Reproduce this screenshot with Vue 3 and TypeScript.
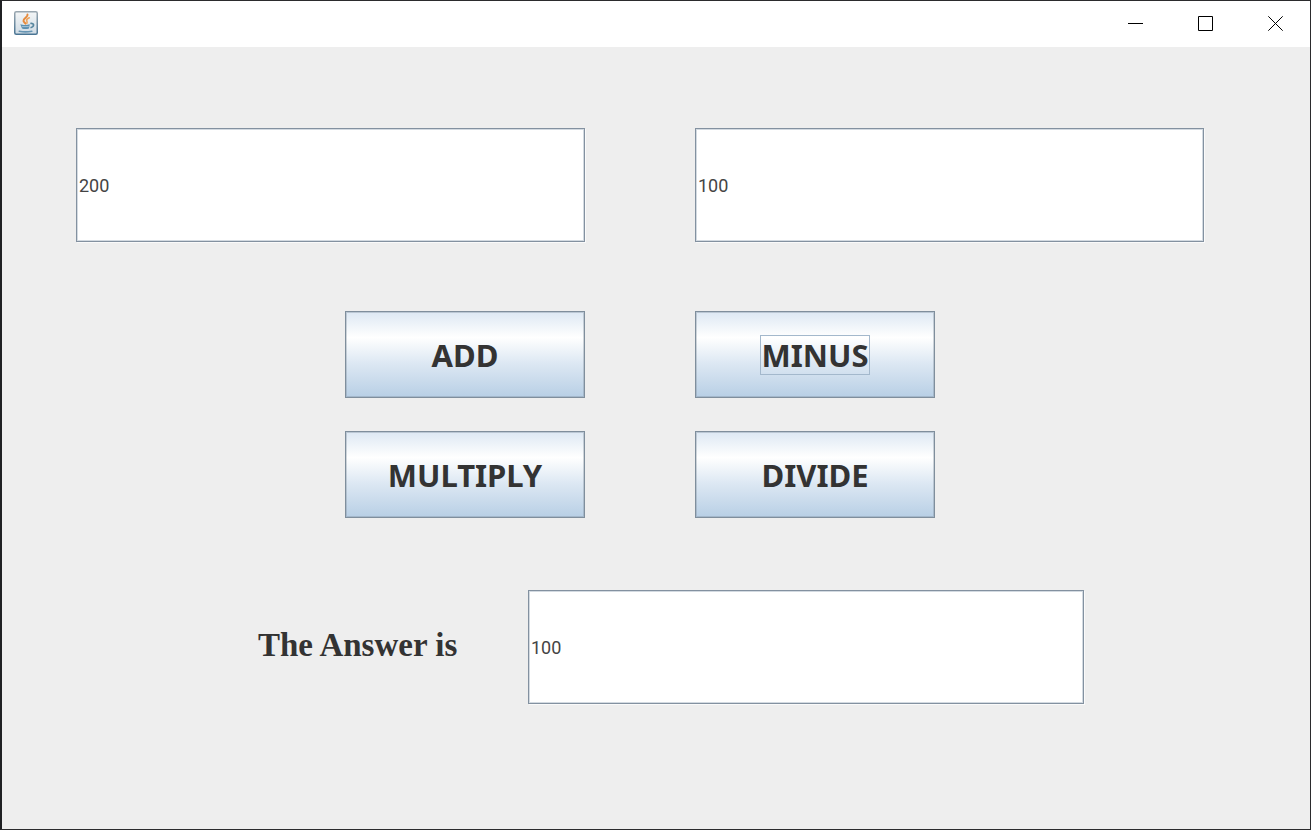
<script setup lang="ts">
import { ref } from 'vue'

type Operation = 'ADD' | 'MINUS' | 'MULTIPLY' | 'DIVIDE'

const operations: Operation[] = ['ADD', 'MINUS', 'MULTIPLY', 'DIVIDE']
const first = ref('200')
const second = ref('100')
const answer = ref('100')
const active = ref<Operation>('MINUS')

function calculate(operation: Operation): void {
  const a = Number(first.value)
  const b = Number(second.value)
  active.value = operation
  if (operation === 'ADD') answer.value = String(a + b)
  else if (operation === 'MINUS') answer.value = String(a - b)
  else if (operation === 'MULTIPLY') answer.value = String(a * b)
  else answer.value = String(a / b)
}
</script>

<template>
  <div class="window">
    <header class="titlebar">
      <svg class="app-icon" viewBox="0 0 24 24" aria-hidden="true">
        <defs>
          <linearGradient id="tile" x1="0" y1="0" x2="0" y2="1">
            <stop offset="0" stop-color="#f4f6f7" />
            <stop offset="1" stop-color="#cfdbe4" />
          </linearGradient>
          <linearGradient id="edge" x1="0" y1="0" x2="0" y2="1">
            <stop offset="0" stop-color="#9aa7b0" />
            <stop offset="1" stop-color="#4a7594" />
          </linearGradient>
        </defs>
        <rect x="0.75" y="0.75" width="22.5" height="22.5" rx="1.5" fill="url(#tile)" stroke="url(#edge)" stroke-width="1.5" />
        <path d="M13.500 3.500c.8 2.600-4.300 3.700-4 6.300.1 1.200 1.500 1.800 2 2.900" fill="none" stroke="#e58a3c" stroke-width="2" stroke-linecap="round" />
        <path d="M15.300 6.800c-1.800.7-3 1.600-2.600 2.800.3 1 .8 1.500.1 2.700" fill="none" stroke="#eda35c" stroke-width="1.600" stroke-linecap="round" />
        <path d="M6.300 13.300c2.500.9 7 .9 9.500 0l-.8 4.200c-2.200.8-5.200.8-7 0z" fill="#5b90b1" />
        <path d="M7.800 15.600h7" fill="none" stroke="#c4d7e3" stroke-width=".7" />
        <path d="M16.300 12.500c4.200-.8 4.400 3 .2 4.300" fill="none" stroke="#57869f" stroke-width="1.700" />
        <path d="M5.300 20.200c3.500.8 9 .8 12.500 0" fill="none" stroke="#6795b3" stroke-width="1.600" stroke-linecap="round" />
      </svg>
      <nav class="window-controls" aria-label="Window">
        <button type="button" aria-label="Minimize">
          <svg viewBox="0 0 15 15"><path d="M0 7.500h15" /></svg>
        </button>
        <button type="button" aria-label="Maximize">
          <svg viewBox="0 0 15 15"><path d="M.5.5h14v14H.5z" /></svg>
        </button>
        <button type="button" aria-label="Close">
          <svg viewBox="0 0 15 15"><path d="M.3.3l14.400 14.400M14.700.3L.3 14.700" /></svg>
        </button>
      </nav>
    </header>

    <main class="content">
      <div class="operands">
        <input v-model="first" class="field" type="text" aria-label="First number" />
        <input v-model="second" class="field" type="text" aria-label="Second number" />
      </div>

      <div class="operations">
        <button
          v-for="operation in operations"
          :key="operation"
          type="button"
          class="operation"
          :class="{ active: operation === active }"
          @click="calculate(operation)"
        >
          <span class="caption">{{ operation }}</span>
        </button>
      </div>

      <div class="result">
        <label for="answer">The Answer is</label>
        <input id="answer" v-model="answer" class="field" type="text" />
      </div>
    </main>
  </div>
</template>

<style>
body {
  margin: 0;
}
</style>

<style scoped>
.window {
  box-sizing: border-box;
  min-height: 100vh;
  display: flex;
  flex-direction: column;
  border: 1px solid #2b2b2d;
  border-left: 2px solid #1f2023;
  background: #eeeeee;
  color: #333333;
  font-family: "Liberation Sans", Arial, sans-serif;
}

.titlebar {
  height: 46px;
  display: flex;
  justify-content: space-between;
  background: #ffffff;
}

.app-icon {
  width: 24px;
  height: 24px;
  margin: 10px 12px;
}

.window-controls {
  display: flex;
  height: 44px;
}

.window-controls button {
  width: 70px;
  display: flex;
  align-items: center;
  justify-content: center;
  padding: 0;
  border: 0;
  background: transparent;
}

.window-controls svg {
  width: 15px;
  height: 15px;
  fill: none;
  stroke: #000000;
  stroke-width: 1;
}

.content {
  display: flex;
  flex-direction: column;
  padding: 81px 106px 40px 74px;
}

.operands {
  display: grid;
  grid-template-columns: 1fr 1fr;
  gap: 110px;
}

.field {
  box-sizing: border-box;
  width: 100%;
  min-width: 0;
  height: 114px;
  padding: 0 2px;
  border: 1px solid #8391a0;
  border-radius: 0;
  outline: 0;
  background: #ffffff;
  box-shadow: inset 0 0 0 1px #d3dae1, 1px 1px 0 #fafafa;
  color: #444444;
  font-family: Roboto, "Liberation Sans", sans-serif;
  font-size: 18px;
}

.operations {
  display: grid;
  grid-template-columns: 240px 240px;
  justify-content: center;
  gap: 33px 110px;
  margin-top: 69px;
}

.operation {
  height: 87px;
  display: flex;
  align-items: center;
  justify-content: center;
  padding: 0;
  border: 1px solid #7f8e9c;
  border-radius: 0;
  background: linear-gradient(#dde8f3 0%, #ffffff 30%, #dde8f3 60%, #b8cfe5 100%);
  box-shadow: inset 0 0 0 1px rgba(122, 138, 153, 0.35);
  color: #333333;
  font-family: "Noto Sans", Tahoma, sans-serif;
  font-size: 31px;
  font-weight: 700;
  line-height: 38px;
}

.caption {
  border: 1px solid transparent;
}

.active .caption {
  border-color: #a3b8cc;
}

.result {
  display: grid;
  grid-template-columns: 270px minmax(0, 556px);
  align-items: center;
  justify-content: center;
  margin: 72px 0 0 62px;
}

.result label {
  padding-bottom: 4px;
  font-family: "Liberation Serif", "Times New Roman", serif;
  font-size: 33px;
  font-weight: 700;
  line-height: 38px;
}
</style>
